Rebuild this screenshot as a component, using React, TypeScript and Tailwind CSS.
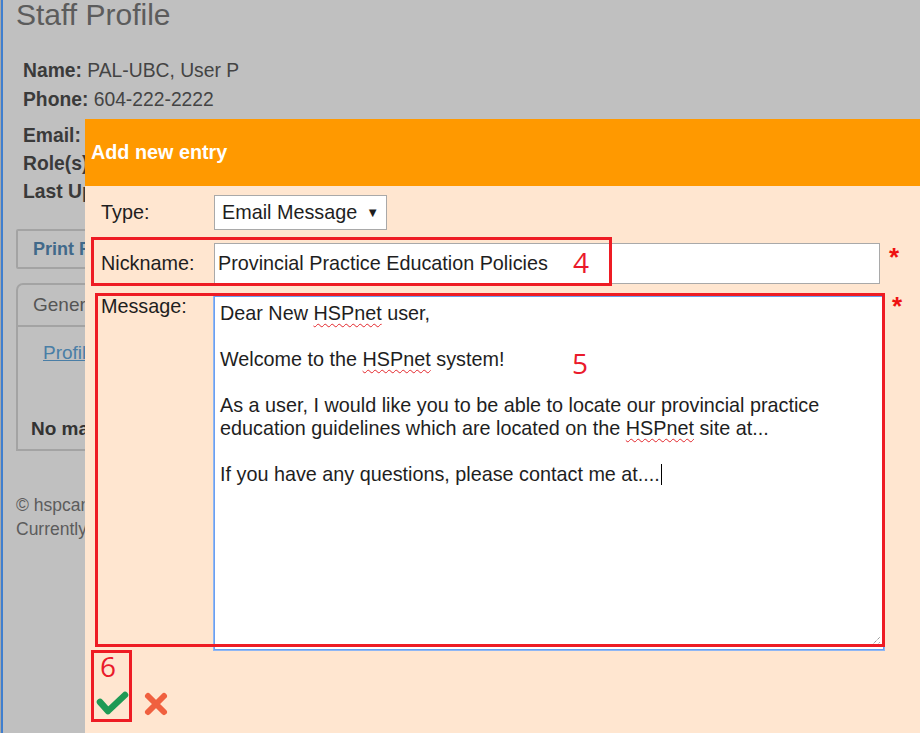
import React from 'react';

const Spell: React.FC<{ children: React.ReactNode }> = ({ children }) => (
  <span className="underline decoration-wavy decoration-[#e3262b] decoration-1 underline-offset-[3px]">{children}</span>
);

const App: React.FC = () => {
  return (
    <div className="relative w-[920px] h-[733px] overflow-hidden bg-[#c0c0c0] font-['Liberation_Sans',Arial,sans-serif]">
      {/* Background page */}
      <div className="flex h-full">
        <div className="w-[1px] bg-[#a8a8a8]" />
        <div className="w-[2px] bg-[#3f7fcf]" />
        <main className="pl-[13px] w-[600px]">
          <h1 className="text-[30px] leading-[30px] text-[#5c5c5c]">Staff Profile</h1>

          <div className="mt-[26px] pl-[7px] text-[19.3px] leading-[29px] text-[#444]">
            <p><b className="text-[#3a3a3a]">Name:</b> PAL-UBC, User P</p>
            <p><b className="text-[#3a3a3a]">Phone:</b> 604-222-2222</p>
          </div>
          <div className="mt-[8px] pl-[7px] text-[19.3px] leading-[28px] text-[#444]">
            <p><b className="text-[#3a3a3a]">Email:</b> user@hspcanada.net</p>
            <p><b className="text-[#3a3a3a]">Role(s):</b> Staff</p>
            <p><b className="text-[#3a3a3a]">Last Updated:</b> 2018</p>
          </div>

          <div className="mt-[23px] w-[260px] h-[40px] border-2 border-[#a3a3a3] rounded-[2px] flex items-center pl-[15px] text-[18px] font-bold text-[#41698a]">
            Print Profile
          </div>

          <div className="mt-[14px] w-[320px]">
            <div className="flex">
              <div className="h-[42px] w-[120px] border-2 border-b-0 border-[#a3a3a3] rounded-tl-[7px] flex items-center pl-[15px] text-[19px] text-[#555]">
                General
              </div>
            </div>
            <div className="h-[126px] border-2 border-[#a3a3a3] pl-[25px] pt-[12px]">
              <p className="text-[19px] text-[#4a7ea6] underline">Profile</p>
              <p className="mt-[47px] -ml-[12px] text-[19px] font-bold text-[#333]">No matching entries</p>
            </div>
          </div>

          <div className="mt-[42px] text-[17.5px] leading-[24px] text-[#5c5c5c]">
            <p>© hspcanada.net</p>
            <p>Currently logged in</p>
          </div>
        </main>
      </div>

      {/* Modal */}
      <div className="absolute left-[85px] top-[119px] w-[860px] h-[614px] bg-[#ffe6d0] text-[#1e1e1e]">
        <div className="h-[67px] bg-[#ff9900] flex items-center pl-[6px] text-white font-bold text-[19.8px]">
          Add new entry
        </div>

        <div className="pt-[9px] pl-[16px] text-[19.8px]">
          <div className="flex items-center">
            <span className="w-[113px]">Type:</span>
            <div className="h-[35px] w-[173px] border border-[#a9a9a9] bg-white flex items-center pl-[7px]">
              <span>Email Message</span>
              <span className="ml-[9px] text-[13px]">▼</span>
            </div>
          </div>

          <div className="mt-[13px] flex items-start">
            <span className="w-[113px] h-[41px] flex items-center">Nickname:</span>
            <div className="h-[41px] w-[666px] border border-[#a9a9a9] bg-white flex items-center pl-[3px] whitespace-nowrap">
              Provincial Practice Education Policies
            </div>
            <span className="ml-[9px] mt-[1px] text-[26px] leading-[26px] font-bold text-[#ee1111]">*</span>
          </div>

          <div className="mt-[12px] flex items-start">
            <span className="w-[113px] leading-[23px] -mt-[1px]">Message:</span>
            <div className="relative h-[354px] w-[670px] border border-[#6a9ff0] shadow-[0_0_0_1px_#8fb6f3] bg-white pl-[5px] pt-[5px] leading-[23px] whitespace-nowrap">
              <div>Dear New <Spell>HSPnet</Spell> user,</div>
              <div className="h-[23px]" />
              <div>Welcome to the <Spell>HSPnet</Spell> system!</div>
              <div className="h-[23px]" />
              <div>As a user, I would like you to be able to locate our provincial practice</div>
              <div>education guidelines which are located on the <Spell>HSPnet</Spell> site at...</div>
              <div className="h-[23px]" />
              <div className="flex items-center">
                If you have any questions, please contact me at....
                <span className="inline-block w-[1px] h-[21px] bg-black ml-[1px]" />
              </div>
              <svg className="absolute right-[2px] bottom-[2px]" width="11" height="11" viewBox="0 0 11 11">
                <line x1="1" y1="10" x2="10" y2="1" stroke="#6b6b6b" strokeWidth="1" strokeDasharray="1 1" />
                <line x1="6" y1="10" x2="10" y2="6" stroke="#6b6b6b" strokeWidth="1" strokeDasharray="1 1" />
              </svg>
            </div>
            <span className="ml-[8px] -mt-[3px] text-[26px] leading-[26px] font-bold text-[#ee1111]">*</span>
          </div>

          <div className="mt-[38px] -ml-[7px] flex items-start">
            <svg width="38" height="30" viewBox="0 0 38 30">
              <path d="M6 14 L14 23 L31 7" fill="none" stroke="#1f9a55" strokeWidth="6.5" strokeLinecap="round" strokeLinejoin="round" />
            </svg>
            <svg className="ml-[10px] mt-[2px]" width="28" height="28" viewBox="0 0 28 28">
              <path d="M6 6 L22 22 M22 6 L6 22" fill="none" stroke="#f0603f" strokeWidth="6" strokeLinecap="round" />
            </svg>
          </div>
        </div>

        {/* Annotations */}
        <div className="absolute left-[6px] top-[118px] w-[521px] h-[49px] border-[3px] border-[#ee1c24]" />
        <div className="absolute left-[10px] top-[174px] w-[790px] h-[354px] border-[3px] border-[#ee1c24]" />
        <div className="absolute left-[6px] top-[531px] w-[41px] h-[72px] border-[3px] border-[#ee1c24]" />
        <span className="absolute left-[488px] top-[129px] text-[28px] leading-[28px] font-['Open_Sans',sans-serif] text-[#ea1a2b]">4</span>
        <span className="absolute left-[487px] top-[230px] text-[28px] leading-[28px] font-['Open_Sans',sans-serif] text-[#ea1a2b]">5</span>
        <span className="absolute left-[15px] top-[533px] text-[28px] leading-[28px] font-['Open_Sans',sans-serif] text-[#ea1a2b]">6</span>
      </div>
    </div>
  );
};

export default App;
